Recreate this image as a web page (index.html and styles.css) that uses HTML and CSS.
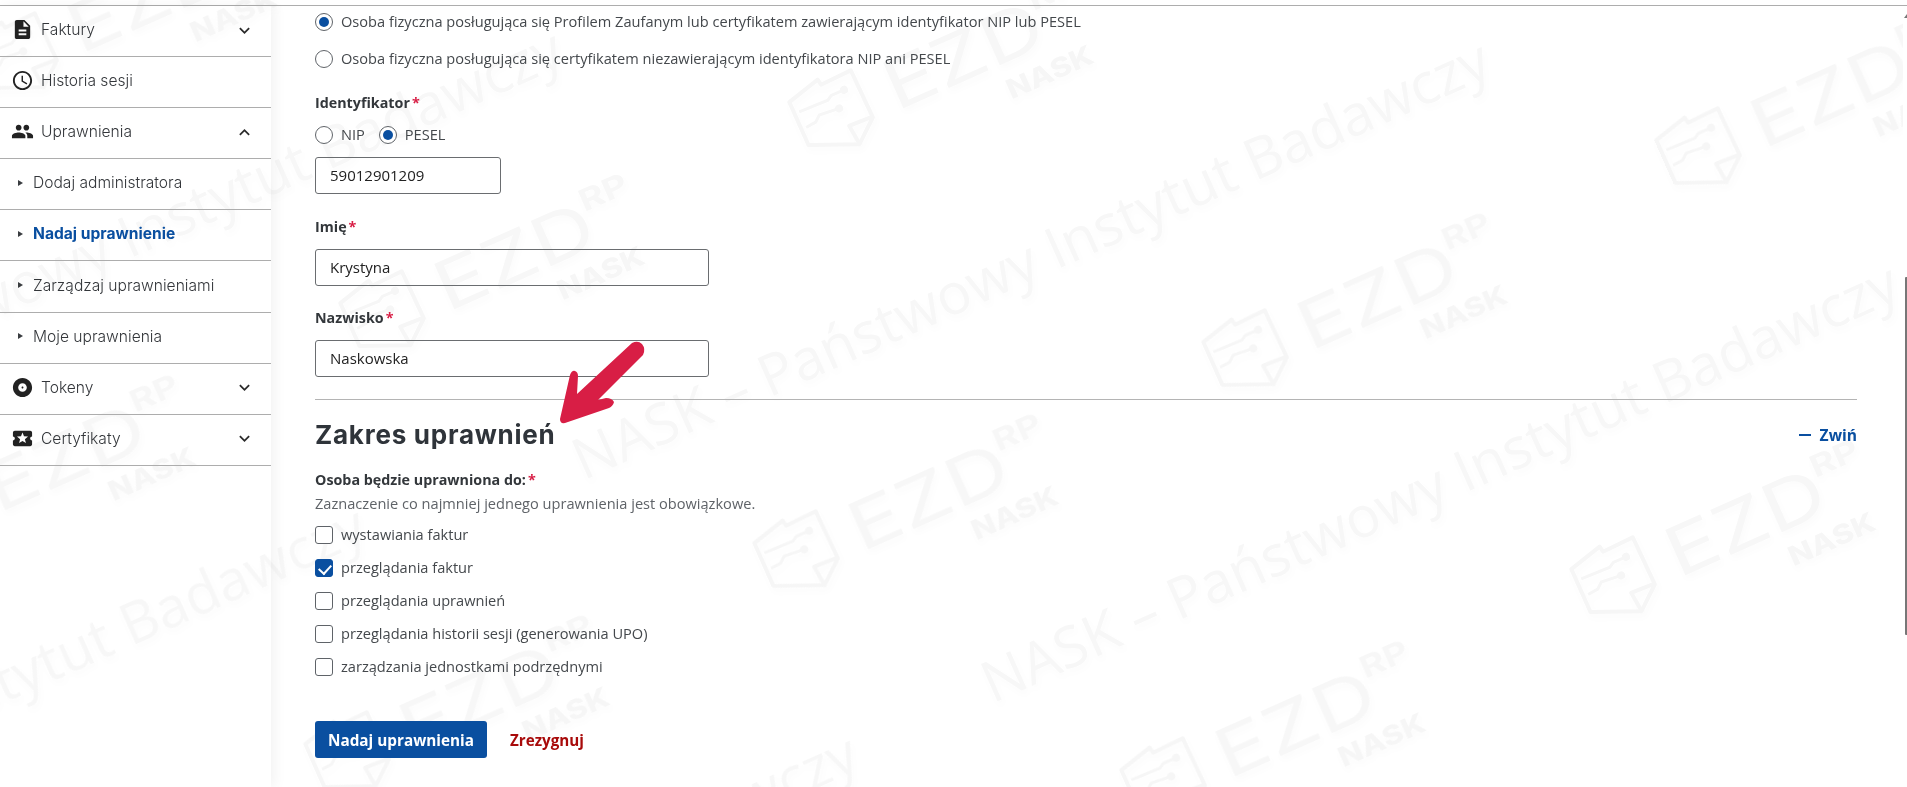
FILE: index.html
```html
<!DOCTYPE html>
<html lang="pl">
<head>
<meta charset="utf-8">
<title>Nadaj uprawnienie</title>
<link rel="stylesheet" href="styles.css">
</head>
<body>
<svg class="watermark" width="1903" height="787" viewBox="0 0 1903 787" aria-hidden="true">
  <defs>
    <g id="wm-logo">
      <path class="wm-line" d="M-34 -26 L1 -35 L2 -29 L35 -30 L36 22 L13 41 L-34 21 Z"/>
      <path class="wm-line" d="M36 21 L11 20 L13 40"/>
      <path class="wm-thin" d="M-29 -13 L2 -12 L7 -15 L21 -15"/>
      <path class="wm-thin" d="M-29 4 L-18 3 L-12 -2 L9 0"/>
      <circle class="wm-dot" cx="21" cy="-15" r="4"/>
      <circle class="wm-dot" cx="9" cy="0" r="4"/>
      <text class="wm-ezd" x="60" y="26" textLength="168" lengthAdjust="spacingAndGlyphs">EZD</text>
      <text class="wm-rp" x="226" y="-10" textLength="50" lengthAdjust="spacingAndGlyphs">RP</text>
      <text class="wm-nask" x="170" y="62" textLength="92" lengthAdjust="spacingAndGlyphs">NASK</text>
    </g>
  </defs>
  <g class="wm-group">
    <use href="#wm-logo" transform="translate(15 55) rotate(-24)"/>
    <use href="#wm-logo" transform="translate(347 754) rotate(-24)"/>
    <use href="#wm-logo" transform="translate(796 553) rotate(-24)"/>
    <use href="#wm-logo" transform="translate(1245 352) rotate(-24)"/>
    <use href="#wm-logo" transform="translate(1698 150) rotate(-24)"/>
    <use href="#wm-logo" transform="translate(-67 514) rotate(-24)"/>
    <use href="#wm-logo" transform="translate(382 313) rotate(-24)"/>
    <use href="#wm-logo" transform="translate(831 112) rotate(-24)"/>
    <use href="#wm-logo" transform="translate(1163 780) rotate(-24)"/>
    <use href="#wm-logo" transform="translate(1613 579) rotate(-24)"/>
    <text class="wm-text" transform="translate(567 64) rotate(-24)" text-anchor="end">NASK – Państwowy Instytut Badawczy</text>
    <text class="wm-text" transform="translate(1494 75) rotate(-24)" text-anchor="end">NASK – Państwowy Instytut Badawczy</text>
    <text class="wm-text" transform="translate(370 540) rotate(-24)" text-anchor="end">NASK – Państwowy Instytut Badawczy</text>
    <text class="wm-text" transform="translate(1903 298) rotate(-24)" text-anchor="end">NASK – Państwowy Instytut Badawczy</text>
    <text class="wm-text" transform="translate(862 768) rotate(-24)" text-anchor="end">NASK – Państwowy Instytut Badawczy</text>
  </g>
</svg>

<div class="topbar"></div>

<div class="layout">
  <nav class="sidebar">
    <a class="nav-row">
      <svg class="nav-icon" viewBox="0 0 24 24"><path d="M14 2H6c-1.1 0-1.99.9-1.99 2L4 20c0 1.1.89 2 1.99 2H18c1.1 0 2-.9 2-2V8l-6-6zm2 16H8v-2h8v2zm0-4H8v-2h8v2zm-3-5V3.5L18.5 9H13z"/></svg>
      <span class="nav-label">Faktury</span>
      <svg class="chevron" viewBox="0 0 24 24"><path d="M16.59 8.59 12 13.17 7.41 8.59 6 10l6 6 6-6z"/></svg>
    </a>
    <a class="nav-row">
      <svg class="nav-icon" viewBox="0 0 24 24"><path d="M11.99 2C6.47 2 2 6.48 2 12s4.47 10 9.99 10C17.52 22 22 17.52 22 12S17.52 2 11.99 2zM12 20c-4.42 0-8-3.58-8-8s3.58-8 8-8 8 3.58 8 8-3.58 8-8 8zm.5-13H11v6l5.25 3.15.75-1.23-4.5-2.67z"/></svg>
      <span class="nav-label">Historia sesji</span>
    </a>
    <a class="nav-row">
      <svg class="nav-icon" viewBox="0 0 24 24"><path d="M16 11c1.66 0 2.99-1.34 2.99-3S17.66 5 16 5c-1.66 0-3 1.34-3 3s1.34 3 3 3zm-8 0c1.66 0 2.99-1.34 2.99-3S9.66 5 8 5C6.34 5 5 6.34 5 8s1.34 3 3 3zm0 2c-2.33 0-7 1.17-7 3.5V19h14v-2.5c0-2.33-4.67-3.5-7-3.5zm8 0c-.29 0-.62.02-.97.05 1.16.84 1.97 1.97 1.97 3.45V19h6v-2.5c0-2.33-4.67-3.5-7-3.5z"/></svg>
      <span class="nav-label">Uprawnienia</span>
      <svg class="chevron chevron-up" viewBox="0 0 24 24"><path d="M16.59 8.59 12 13.17 7.41 8.59 6 10l6 6 6-6z"/></svg>
    </a>
    <a class="nav-row nav-sub"><span class="nav-tri"></span><span class="nav-label">Dodaj administratora</span></a>
    <a class="nav-row nav-sub nav-active"><span class="nav-tri"></span><span class="nav-label">Nadaj uprawnienie</span></a>
    <a class="nav-row nav-sub"><span class="nav-tri"></span><span class="nav-label">Zarządzaj uprawnieniami</span></a>
    <a class="nav-row nav-sub"><span class="nav-tri"></span><span class="nav-label">Moje uprawnienia</span></a>
    <a class="nav-row">
      <svg class="nav-icon" viewBox="0 0 24 24"><path d="M12 2C6.48 2 2 6.48 2 12s4.48 10 10 10 10-4.48 10-10S17.52 2 12 2zm0 14.5c-2.49 0-4.5-2.01-4.5-4.5S9.51 7.5 12 7.5s4.5 2.01 4.5 4.5-2.01 4.5-4.5 4.5zm0-5.5c-.55 0-1 .45-1 1s.45 1 1 1 1-.45 1-1-.45-1-1-1z"/></svg>
      <span class="nav-label">Tokeny</span>
      <svg class="chevron" viewBox="0 0 24 24"><path d="M16.59 8.59 12 13.17 7.41 8.59 6 10l6 6 6-6z"/></svg>
    </a>
    <a class="nav-row">
      <svg class="nav-icon" viewBox="0 0 24 24"><path d="M20 12c0-1.1.9-2 2-2V6c0-1.1-.9-2-2-2H4c-1.1 0-1.99.9-1.99 2v4c1.1 0 1.99.9 1.99 2s-.89 2-2 2v4c0 1.1.9 2 2 2h16c1.1 0 2-.9 2-2v-4c-1.1 0-2-.9-2-2zm-4.42 4.8L12 14.5l-3.58 2.3 1.08-4.12-3.29-2.69 4.24-.25L12 5.8l1.54 3.95 4.24.25-3.29 2.69 1.09 4.11z"/></svg>
      <span class="nav-label">Certyfikaty</span>
      <svg class="chevron" viewBox="0 0 24 24"><path d="M16.59 8.59 12 13.17 7.41 8.59 6 10l6 6 6-6z"/></svg>
    </a>
  </nav>

  <main class="content">
    <div class="radio-stack">
      <label class="choice"><input type="radio" name="who" checked><span>Osoba fizyczna posługująca się Profilem Zaufanym lub certyfikatem zawierającym identyfikator NIP lub PESEL</span></label>
      <label class="choice"><input type="radio" name="who"><span>Osoba fizyczna posługująca się certyfikatem niezawierającym identyfikatora NIP ani PESEL</span></label>
    </div>

    <div class="field-label field-id">Identyfikator<span class="req">*</span></div>
    <div class="radio-inline">
      <label class="choice"><input type="radio" name="idt"><span>NIP</span></label>
      <label class="choice"><input type="radio" name="idt" checked><span>PESEL</span></label>
    </div>
    <input class="text-input input-short" type="text" value="59012901209">

    <div class="field-label field-first">Imię<span class="req">*</span></div>
    <input class="text-input" type="text" value="Krystyna">

    <div class="field-label field-last">Nazwisko<span class="req">*</span></div>
    <input class="text-input" type="text" value="Naskowska">

    <hr class="divider">

    <div class="section-head">
      <h2 class="section-title">Zakres uprawnień</h2>
      <a class="collapse"><span class="collapse-dash"></span>Zwiń</a>
    </div>

    <div class="field-label field-scope">Osoba będzie uprawniona do:<span class="req">*</span></div>
    <div class="hint">Zaznaczenie co najmniej jednego uprawnienia jest obowiązkowe.</div>

    <div class="check-stack">
      <label class="choice"><input type="checkbox"><span>wystawiania faktur</span></label>
      <label class="choice"><input type="checkbox" checked><span>przeglądania faktur</span></label>
      <label class="choice"><input type="checkbox"><span>przeglądania uprawnień</span></label>
      <label class="choice"><input type="checkbox"><span>przeglądania historii sesji (generowania UPO)</span></label>
      <label class="choice"><input type="checkbox"><span>zarządzania jednostkami podrzędnymi</span></label>
    </div>

    <div class="actions">
      <button class="btn-primary" type="button">Nadaj uprawnienia</button>
      <a class="btn-cancel">Zrezygnuj</a>
    </div>
  </main>
</div>

<svg class="annotation" width="100" height="100" viewBox="555 340 100 100" aria-hidden="true">
  <path d="M632 343 Q638 340 642 344 Q646 349 643 355 L598 400 L606 398 Q612 398 614 402 Q613 406 609 408 L565 423 Q560 424 560 419 L570 375 Q572 370 575 371 Q578 372 578 376 L577 394 Z"/>
</svg>

<div class="scrollbar"><span class="scroll-arrow"></span><span class="scroll-thumb"></span></div>
</body>
</html>
```

FILE: styles.css
```css
* { box-sizing: border-box; }

html, body {
  margin: 0;
  height: 787px;
  overflow: hidden;
  background: #fff;
}

body {
  position: relative;
  font-family: "Open Sans", "Liberation Sans", sans-serif;
  font-size: 14.6px;
  color: #44484c;
}

/* watermark */
.watermark {
  position: absolute;
  left: 0;
  top: 0;
  pointer-events: none;
}
.wm-group { filter: drop-shadow(2px 4px 3px rgba(0, 0, 0, .015)); }
.wm-line { fill: none; stroke: #f6f6f6; stroke-width: 4; stroke-linejoin: round; }
.wm-thin { fill: none; stroke: #f6f6f6; stroke-width: 3; }
.wm-dot { fill: #f6f6f6; }
.wm-ezd { font: 400 68px "Inter", sans-serif; fill: #f7f7f7; }
.wm-rp { font: 700 30px "Inter", sans-serif; fill: #f7f7f7; }
.wm-nask { font: 800 27px "Inter", sans-serif; fill: #f6f6f6; }
.wm-text { font: 400 57px "Open Sans", sans-serif; fill: #f7f7f7; }

.topbar {
  position: relative;
  height: 6px;
  border-bottom: 1px solid #adadad;
}

.layout {
  position: relative;
  display: flex;
  height: 781px;
}

/* sidebar */
.sidebar {
  flex: 0 0 271px;
  box-shadow: 4px 0 12px rgba(0, 0, 0, .05);
  font-family: "Inter", "DejaVu Sans", sans-serif;
  font-size: 15.6px;
  font-weight: 300;
  color: #33363a;
}
.nav-row {
  display: flex;
  align-items: center;
  height: 51.1px;
  padding: 0 0 3px 11px;
  border-bottom: 1px solid #adadad;
}
.nav-icon {
  flex: none;
  width: 23px;
  height: 23px;
  margin-right: 7px;
  fill: #222;
}
.chevron {
  flex: none;
  width: 21px;
  height: 21px;
  margin: 1px 16px 0 auto;
  fill: #2a2a2a;
}
.chevron-up { transform: rotate(180deg); }
.nav-sub { padding-left: 18px; }
.nav-tri {
  flex: none;
  width: 0;
  height: 0;
  margin-right: 10px;
  border-left: 5px solid #3a3d40;
  border-top: 3px solid transparent;
  border-bottom: 3px solid transparent;
}
.nav-active { color: #0a4fa0; font-weight: 700; }
.nav-active .nav-tri { border-left-color: #3a3d40; }

/* content */
.content {
  flex: 1;
  padding: 7px 50px 0 44px;
}
.choice {
  display: flex;
  align-items: center;
  gap: 8px;
  height: 18px;
  line-height: 18px;
}
.choice span { position: relative; top: -1px; }
.radio-stack, .check-stack { display: flex; flex-direction: column; }
.radio-stack { gap: 19px; }
.check-stack { gap: 15px; margin-top: 13px; }
.radio-inline { display: flex; gap: 14px; margin-top: 13px; }

input[type="radio"], input[type="checkbox"] {
  appearance: none;
  flex: none;
  position: relative;
  width: 18px;
  height: 18px;
  margin: 0;
  border: 1px solid #5f6368;
  background: #fff;
}
input[type="radio"] { border-radius: 50%; }
input[type="radio"]:checked::after {
  content: "";
  position: absolute;
  left: 3px;
  top: 3px;
  width: 10px;
  height: 10px;
  border-radius: 50%;
  background: #0a4fa0;
}
input[type="checkbox"] { border-radius: 3px; }
input[type="checkbox"]:checked {
  background: #0a4fa0;
  border-color: #0a4fa0;
}
input[type="checkbox"]:checked::after {
  content: "";
  position: absolute;
  left: 5px;
  top: 2px;
  width: 6px;
  height: 10px;
  border: solid #fff;
  border-width: 0 2px 2px 0;
  transform: rotate(42deg);
}

.field-label {
  font-size: 14.3px;
  font-weight: 700;
  line-height: 20px;
  color: #33373b;
}
.req { color: #d81e45; margin-left: 2px; }
.field-id { margin-top: 25px; }
.field-first { margin-top: 23px; }
.field-last { margin-top: 22px; }
.field-scope { margin-top: 19px; }

.text-input {
  display: block;
  width: 394px;
  height: 37px;
  margin-top: 12px;
  padding: 0 14px 2px;
  border: 1px solid #6a6d70;
  border-radius: 3px;
  background: transparent;
  font: 400 15px "Open Sans", sans-serif;
  color: #222;
  outline: none;
}
.input-short { width: 186px; margin-top: 13px; }

.divider {
  height: 0;
  margin: 22px 0 0;
  border: 0;
  border-top: 1px solid #b4b4b4;
}
.section-head {
  display: flex;
  align-items: center;
  justify-content: space-between;
  margin-top: 19px;
}
.section-title {
  margin: 0;
  font: 700 26px/32px "Inter", "DejaVu Sans", sans-serif;
  letter-spacing: .75px;
  color: #2f343a;
}
.collapse {
  display: flex;
  align-items: center;
  gap: 9px;
  font-size: 15.6px;
  font-weight: 700;
  color: #0a4fa0;
}
.collapse-dash {
  width: 12px;
  height: 2px;
  background: #0a4fa0;
}
.hint {
  margin-top: 3px;
  line-height: 20px;
  color: #5f6368;
}

.actions {
  display: flex;
  align-items: center;
  gap: 23px;
  margin-top: 45px;
}
.btn-primary {
  width: 172px;
  height: 37px;
  padding: 0;
  border: 0;
  border-radius: 3px;
  background: #0a4fa0;
  font: 700 15.3px "Open Sans", sans-serif;
  color: #fff;
}
.btn-cancel { font-size: 15.2px; font-weight: 700; color: #a80a0a; }

/* annotation arrow drawn over the capture */
.annotation {
  position: absolute;
  left: 555px;
  top: 340px;
  fill: #d81e45;
}

.scrollbar {
  position: absolute;
  left: 1903px;
  top: 6px;
  width: 4px;
  height: 781px;
  background: #fff;
}
.scroll-arrow {
  position: absolute;
  left: 1px;
  top: 8px;
  border-left: 3px solid transparent;
  border-right: 3px solid transparent;
  border-bottom: 4px solid #777;
}
.scroll-thumb {
  position: absolute;
  left: 2px;
  top: 271px;
  width: 2px;
  height: 358px;
  background: #777;
  border-radius: 1px 0 0 1px;
}
```
